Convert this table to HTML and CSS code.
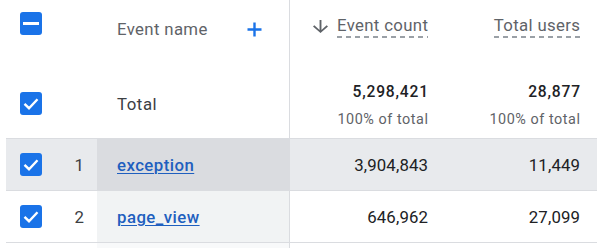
FILE: index.html
```html
<!DOCTYPE html>
<html>
<head>
<meta charset="utf-8">
<link rel="stylesheet" href="styles.css">
</head>
<body>
<div class="report">
  <div class="row head">
    <div class="cell sel">
      <span class="cb"><svg width="22" height="23" viewBox="0 0 22 23"><rect x="3" y="10" width="16" height="3" fill="#fff"/></svg></span>
    </div>
    <div class="cell name">
      <span class="label">Event name</span>
      <svg class="plus" width="15" height="15" viewBox="0 0 15 15"><path d="M7.5 0.5v14M0.5 7.5h14" stroke="#1a73e8" stroke-width="2.4" fill="none"/></svg>
    </div>
    <div class="cell num c3">
      <svg class="arrow" width="15" height="13" viewBox="4 4 16 16" preserveAspectRatio="none"><path d="M20 12l-1.41-1.41L13 16.17V4h-2v12.17l-5.58-5.59L4 12l8 8 8-8z" fill="#5f6368"/></svg>
      <span class="label dash">Event count</span>
    </div>
    <div class="cell num c4">
      <span class="label dash">Total users</span>
    </div>
  </div>

  <div class="row total">
    <div class="cell sel">
      <span class="cb"><svg width="22" height="23" viewBox="0 0 22 23"><polyline points="4.5,11.8 9,16.2 17.5,7.2" fill="none" stroke="#fff" stroke-width="2.4"/></svg></span>
    </div>
    <div class="cell name"><span class="total-label">Total</span></div>
    <div class="cell num c3">
      <div class="stack"><span class="big">5,298,421</span><span class="sub">100% of total</span></div>
    </div>
    <div class="cell num c4">
      <div class="stack"><span class="big">28,877</span><span class="sub">100% of total</span></div>
    </div>
  </div>

  <div class="row data active">
    <div class="cell sel">
      <span class="cb"><svg width="22" height="23" viewBox="0 0 22 23"><polyline points="4.5,11.8 9,16.2 17.5,7.2" fill="none" stroke="#fff" stroke-width="2.4"/></svg></span>
      <span class="idx">1</span>
    </div>
    <div class="cell name"><a class="link" href="#">exception</a></div>
    <div class="cell num c3"><span class="val">3,904,843</span></div>
    <div class="cell num c4"><span class="val">11,449</span></div>
  </div>

  <div class="row data">
    <div class="cell sel">
      <span class="cb"><svg width="22" height="23" viewBox="0 0 22 23"><polyline points="4.5,11.8 9,16.2 17.5,7.2" fill="none" stroke="#fff" stroke-width="2.4"/></svg></span>
      <span class="idx">2</span>
    </div>
    <div class="cell name"><a class="link" href="#">page_view</a></div>
    <div class="cell num c3"><span class="val">646,962</span></div>
    <div class="cell num c4"><span class="val">27,099</span></div>
  </div>

  <div class="row next">
    <div class="cell sel"></div>
    <div class="cell name"></div>
    <div class="cell num c3"></div>
    <div class="cell num c4"></div>
  </div>
</div>
</body>
</html>
```

FILE: styles.css
```css
html, body {
  margin: 0;
  padding: 0;
  background: #fff;
  font-family: Roboto, "Liberation Sans", Arial, sans-serif;
  overflow: hidden;
}

.report {
  margin-left: 6px;
  width: 591px;
}

.row {
  display: grid;
  grid-template-columns: 91px 193px 150px 157px;
}

.cell {
  box-sizing: border-box;
  display: flex;
}

.name {
  border-right: 1px solid #dadce0;
}

.num {
  justify-content: flex-end;
}

.c3 { padding-right: 12px; }
.c4 { padding-right: 17px; }

.cb {
  display: block;
  width: 22px;
  height: 23px;
  border-radius: 3px;
  background: #1a73e8;
  flex: none;
}

.cb svg {
  display: block;
}

/* header */
.head {
  height: 60px;
}

.head .cell {
  align-items: flex-start;
}

.head .sel {
  padding: 12px 0 0 14px;
}

.head .name {
  padding: 19px 27px 0 20px;
  justify-content: space-between;
}

.head .num {
  padding-top: 15px;
}

.label {
  font-size: 16.8px;
  line-height: 20px;
  color: #5f6368;
  letter-spacing: 0.35px;
  margin-right: -0.35px;
}

.plus {
  margin-top: 2.5px;
}

.arrow {
  margin-top: 5px;
  margin-right: 9px;
}

.dash {
  background-image: linear-gradient(to right, #9aa0a6 0 5px, transparent 5px 9px);
  background-size: 9px 2px;
  background-repeat: repeat-x;
  background-position: left bottom;
  height: 20px;
  padding-bottom: 3px;
}

/* total row */
.total {
  height: 78px;
}

.total .cell {
  align-items: center;
  padding-top: 9px;
}

.total .sel {
  padding-left: 14px;
}

.total .name {
  padding-left: 20px;
}

.total .num {
  padding-top: 13px;
}

.total-label {
  font-size: 16.8px;
  line-height: 20px;
  color: #3c4043;
  letter-spacing: 0.55px;
}

.stack {
  display: flex;
  flex-direction: column;
  align-items: flex-end;
}

.big {
  font-size: 15.6px;
  line-height: 20px;
  font-weight: 500;
  color: #202124;
  letter-spacing: 0.8px;
  margin-right: -0.8px;
}

.sub {
  margin-top: 8px;
  font-size: 14.4px;
  line-height: 20px;
  color: #5f6368;
  letter-spacing: 0.55px;
  margin-right: -0.55px;
}

/* data rows */
.data {
  height: 51px;
  border-top: 1px solid #dadce0;
}

.data .cell {
  align-items: center;
}

.data .sel {
  padding: 0 13px 0 14px;
  justify-content: space-between;
}

.data .name {
  padding-left: 20px;
  background: #f1f3f4;
}

.idx {
  font-size: 16.8px;
  line-height: 20px;
  color: #3c4043;
}

.link {
  font-size: 16.8px;
  line-height: 20px;
  font-weight: 500;
  color: #1f5fbf;
  letter-spacing: 0.45px;
  text-decoration: underline;
  text-decoration-thickness: 1px;
  text-underline-offset: 2px;
}

.val {
  font-size: 16.8px;
  line-height: 20px;
  color: #202124;
  letter-spacing: 0.15px;
  margin-right: -0.15px;
}

.active .sel,
.active .num {
  background: #e8eaed;
}

.active .name {
  background: #dadce0;
}

.next {
  height: 8px;
  border-top: 1px solid #dadce0;
}

.next .name {
  background: #f8f9fa;
}
```
